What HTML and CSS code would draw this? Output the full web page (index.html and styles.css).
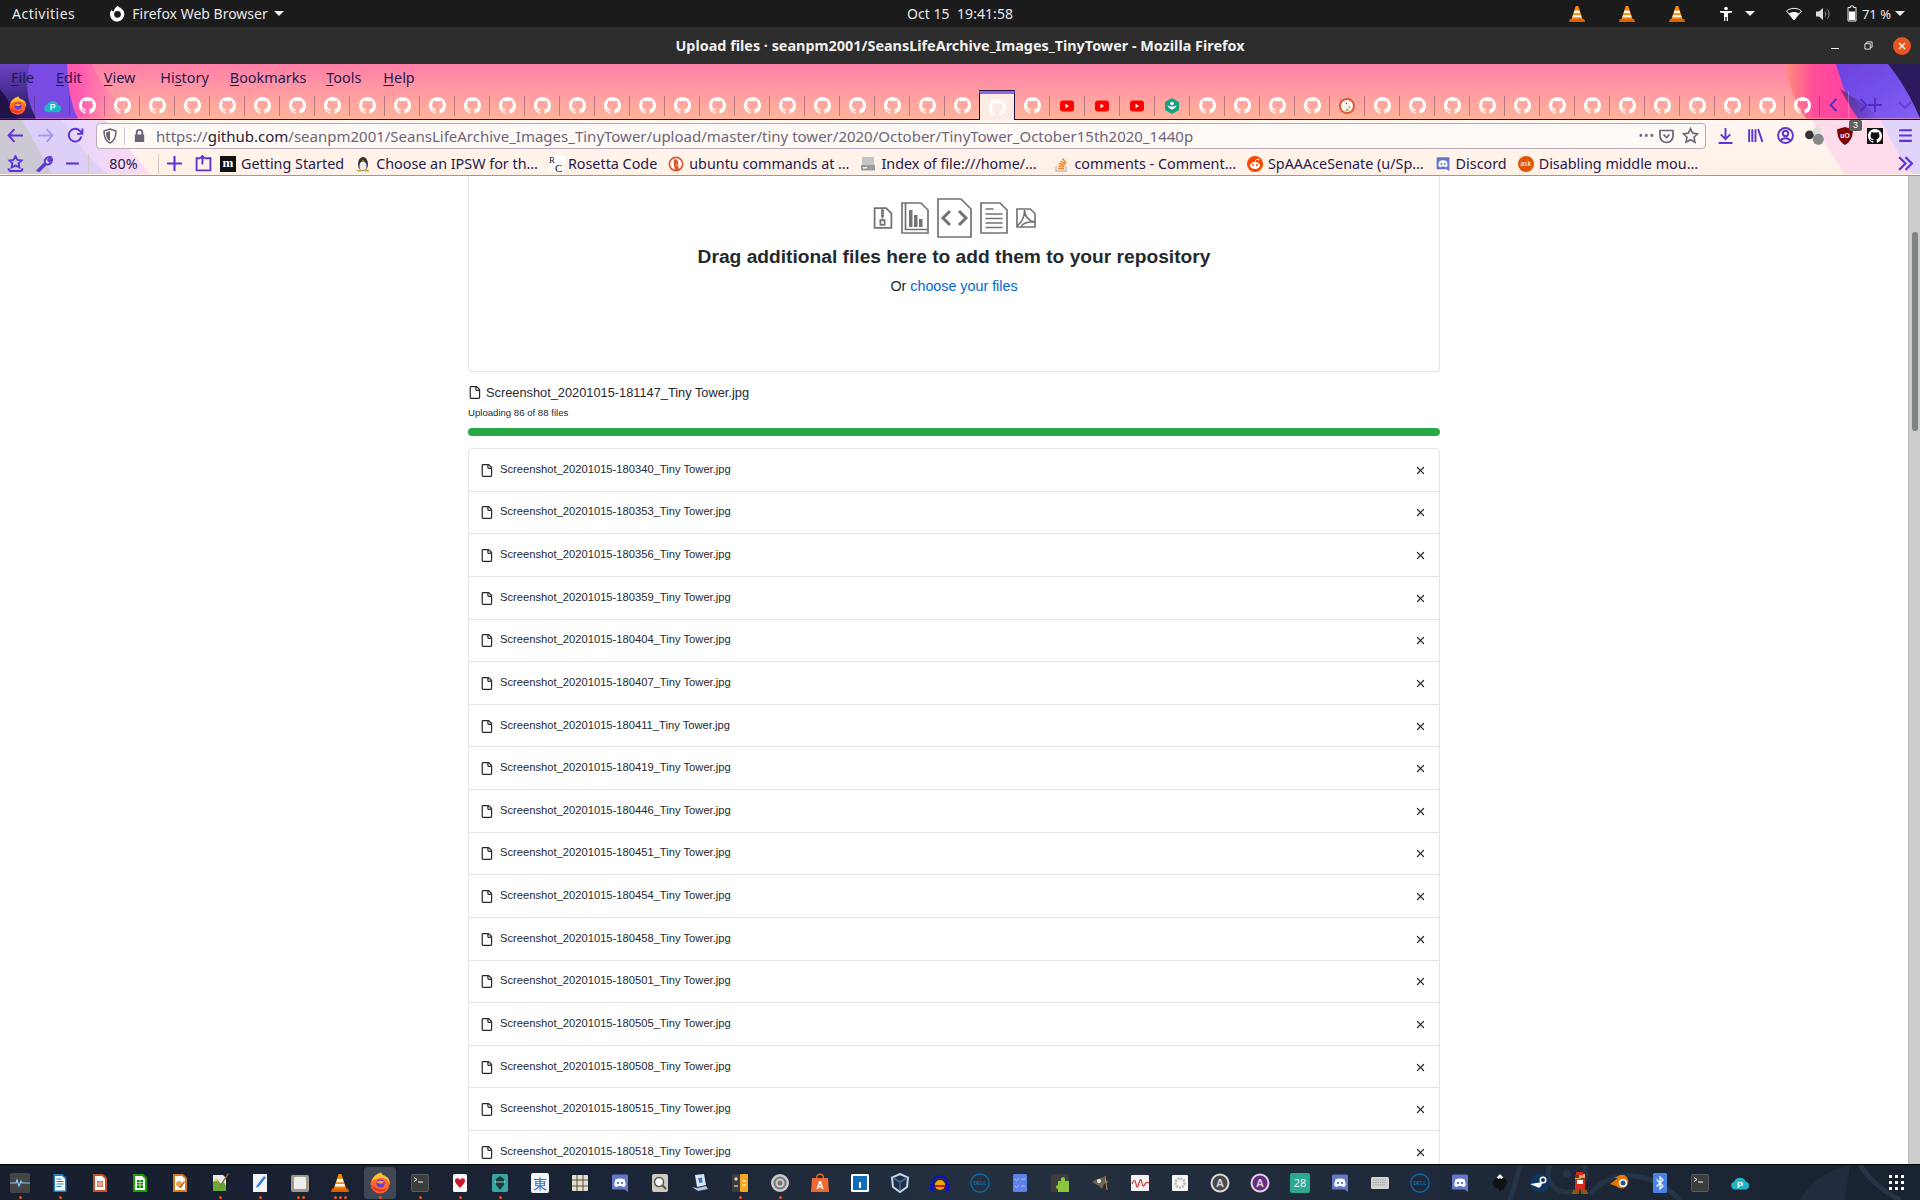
FILE: index.html
```html
<!DOCTYPE html>
<html lang="en">
<head>
    <meta charset="UTF-8">
    <title>Upload files · seanpm2001/SeansLifeArchive_Images_TinyTower</title>
    <link rel="stylesheet" href="styles.css">
</head>
<body>

<svg class="sprites" width="0" height="0">
    <symbol id="gh" viewBox="0 0 16 16"><path fill-rule="evenodd" d="M8 0C3.58 0 0 3.58 0 8c0 3.54 2.29 6.53 5.47 7.59.4.07.55-.17.55-.38 0-.19-.01-.82-.01-1.49-2.01.37-2.53-.49-2.69-.94-.09-.23-.48-.94-.82-1.13-.28-.15-.68-.52-.01-.53.63-.01 1.08.58 1.23.82.72 1.21 1.87.87 2.33.66.07-.52.28-.87.51-1.07-1.78-.2-3.64-.89-3.64-3.95 0-.87.31-1.59.82-2.15-.08-.2-.36-1.02.08-2.12 0 0 .67-.21 2.2.82.64-.18 1.32-.27 2-.27.68 0 1.36.09 2 .27 1.53-1.04 2.2-.82 2.2-.82.44 1.1.16 1.92.08 2.12.51.56.82 1.27.82 2.15 0 3.07-1.87 3.75-3.65 3.95.29.25.54.73.54 1.48 0 1.07-.01 1.93-.01 2.2 0 .21.15.46.55.38A8.013 8.013 0 0016 8c0-4.42-3.58-8-8-8z"/></symbol>
    <symbol id="file" viewBox="0 0 16 16"><path fill-rule="evenodd" d="M2 1.75C2 .784 2.784 0 3.75 0h6.586c.464 0 .909.184 1.237.513l2.914 2.914c.329.328.513.773.513 1.237v9.586A1.75 1.75 0 0113.25 16h-9.5A1.75 1.75 0 012 14.25V1.75zm1.75-.25a.25.25 0 00-.25.25v12.5c0 .138.112.25.25.25h9.5a.25.25 0 00.25-.25V6h-2.75A1.75 1.75 0 019 4.25V1.5H3.75zm6.75.062V4.25c0 .138.112.25.25.25h2.688a.252.252 0 00-.011-.013l-2.914-2.914a.272.272 0 00-.013-.011z"/></symbol>
    <symbol id="x" viewBox="0 0 16 16"><path d="M3.72 3.72a.75.75 0 011.06 0L8 6.94l3.22-3.22a.75.75 0 111.06 1.06L9.06 8l3.22 3.22a.75.75 0 11-1.06 1.06L8 9.06l-3.22 3.22a.75.75 0 01-1.06-1.06L6.94 8 3.72 4.78a.75.75 0 010-1.06z"/></symbol>
    <symbol id="yt" viewBox="0 0 16 16"><rect x="1" y="2.5" width="14" height="11" rx="3" fill="#f00"/><path d="M6.5 5.8v4.4L10 8z" fill="#fff"/></symbol>
    <symbol id="vlc" viewBox="0 0 20 20"><path d="M8.6 1h2.8l5 15H3.6z" fill="#f68a00"/><path d="M7.3 6h5.4l1 3.2H6.3zM5.7 11h8.6l.8 2.6H4.9z" fill="#f4f4f4"/><path d="M2 15.5h16l1 3.5H1z" fill="#e35d00"/></symbol>
    <symbol id="ff" viewBox="0 0 20 20"><circle cx="10" cy="11" r="8.5" fill="#ff6a2b"/><path d="M2.500 8C4 3.500 8 1 11.500.5c-.5 2 2 2.500 4 3.500 2.500 1.500 4 4.500 3.500 8-1-4.500-4-6.500-7.500-6.500S5 7 2.500 8z" fill="#ffc02e"/><path d="M1.500 11c1 4 4 7 8.500 7 3 0 5.500-1.500 7-4-2 1.500-4.500 2-7 1.500S3 13.500 1.500 11z" fill="#f0342c"/><circle cx="10.500" cy="10.500" r="3.700" fill="#6a3bd0"/><path d="M7 9.500c1.500-2 4.500-2 7-.5-1 .3-1.500.8-2 1.400-1.800.5-3.500 0-5-.9z" fill="#ff9a3c"/></symbol>
    <symbol id="term" viewBox="0 0 20 20"><rect x="1.500" y="1.500" width="17" height="17" rx="1.500" fill="#3d3d3d" stroke="#777" stroke-width=".6"/><path d="M4 4.500l3 2-3 2" fill="none" stroke="#fff" stroke-width="1"/><path d="M8 9h5" stroke="#fff" stroke-width="1"/></symbol>
    <symbol id="discord" viewBox="0 0 20 20"><path d="M3 1.500h14a1 1 0 011 1V19l-3.500-2.500H3a1 1 0 01-1-1v-13a1 1 0 011-1z" fill="#6577c8"/><path d="M5.500 6.500C8 5 12 5 14.500 6.500 15.500 9 15.800 11 15.500 13c-1 .6-2 1-2.700 1l-.6-1H7.800l-.6 1c-.7 0-1.700-.4-2.700-1-.3-2 0-4 1-6.500z" fill="#fff"/><circle cx="8" cy="10" r="1.200" fill="#6577c8"/><circle cx="12" cy="10" r="1.200" fill="#6577c8"/></symbol>
</svg>

<header class="top-bar">
    <div class="top-left">
        <span class="activities">Activities</span>
        <span class="app-menu">
            <svg class="app-icon" viewBox="0 0 20 20"><path fill="#fff" fill-rule="evenodd" d="M10 1c1 1.500 3 2 4.500 3A8.500 8.500 0 1 1 3 5.500C3.500 7 4.500 7.500 5.500 7.500 6 5 8 3 10 1zm0 6a4 4 0 1 0 0 8 4 4 0 0 0 0-8z"/></svg>
            Firefox Web Browser <i class="caret"></i>
        </span>
    </div>
    <div class="clock">Oct 15&nbsp; 19:41:58</div>
    <div class="tray">
        <svg class="tray-vlc"><use href="#vlc"/></svg>
        <svg class="tray-vlc"><use href="#vlc"/></svg>
        <svg class="tray-vlc"><use href="#vlc"/></svg>
        <svg class="tray-a11y" viewBox="0 0 16 16"><circle cx="8" cy="2.500" r="1.800" fill="#fff"/><path d="M2 5h12v1.600l-4 .6V15H8.700v-4H7.300v4H6V7.200l-4-.6z" fill="#fff"/></svg>
        <i class="caret caret-a11y"></i>
        <svg class="tray-wifi" viewBox="0 0 16 14"><path d="M8 13L.5 4C4.500.5 11.500.5 15.500 4z" fill="none" stroke="#eee"/><path d="M8 13L3 6.500c3-2 7-2 10 0z" fill="#fff"/></svg>
        <svg class="tray-sound" viewBox="0 0 16 14"><path d="M1 4.500h3L8 1v12L4 9.500H1z" fill="#ddd"/><path d="M10 4.500c1 1.500 1 3.500 0 5M12.500 2.500c2 2.500 2 6.500 0 9" fill="none" stroke="#999"/></svg>
        <svg class="tray-batt" viewBox="0 0 10 16"><path d="M3.500.5h3v1.500h2.500v13.500H1V2h2.500z" fill="none" stroke="#eee"/><rect x="2" y="6" width="6" height="8.500" fill="#fff"/></svg>
        <span class="batt-text">71 %</span>
        <i class="caret"></i>
    </div>
</header>

<div class="title-bar">
    <span class="title-text">Upload files · seanpm2001/SeansLifeArchive_Images_TinyTower - Mozilla Firefox</span>
    <div class="win-btns">
        <span class="win-min"></span>
        <svg class="win-max" viewBox="0 0 10 10"><path d="M1 3h6v6H1zM3 3V1h6v6H7" fill="none" stroke="#eee"/></svg>
        <span class="win-close"><svg viewBox="0 0 10 10"><path d="M2 2l6 6M8 2l-6 6" stroke="#fff" stroke-width="1.300"/></svg></span>
    </div>
</div>

<div class="chrome">
    <!-- theme artwork behind the toolbars -->
    <svg class="theme-art" viewBox="0 0 1920 112" preserveAspectRatio="none">
        <defs>
            <linearGradient id="tl" x1="0" x2="1" y1="0" y2="0"><stop offset="0" stop-color="#ff3fb4"/><stop offset=".6" stop-color="#ff5cb0"/><stop offset="1" stop-color="#ff8aa8" stop-opacity="0"/></linearGradient>
            <linearGradient id="tr" x1="0" x2="1" y1="0" y2="0"><stop offset="0" stop-color="#ff8f7a"/><stop offset=".4" stop-color="#ff4d9c"/><stop offset="1" stop-color="#ff3fa0"/></linearGradient>
            <linearGradient id="trp" x1="0" x2="1" y1="0" y2="1"><stop offset="0" stop-color="#6d42dc"/><stop offset=".5" stop-color="#7450ea"/><stop offset="1" stop-color="#8460f4"/></linearGradient>
            <linearGradient id="td" x1="0" x2="1" y1="0" y2="0"><stop offset="0" stop-color="#4a1f70" stop-opacity=".7"/><stop offset="1" stop-color="#4a1f70" stop-opacity="0"/></linearGradient>
            <linearGradient id="lnav" x1="0" x2="1" y1="0" y2="0"><stop offset="0" stop-color="#e4d6ff"/><stop offset="1" stop-color="#ffd9f0"/></linearGradient>
            <linearGradient id="ld" x1="0" x2="0" y1="0" y2="1"><stop offset="0" stop-color="#6a42c4"/><stop offset="1" stop-color="#2a1760"/></linearGradient>
        </defs>
        <path d="M0 0H92C100 20 118 40 135 55H0z" fill="url(#tl)"/>
        <path d="M0 0H67C68 20 70 40 78 55H0z" fill="#7a4be2"/>
        <path d="M0 0H30C24 20 28 40 36 55H0z" fill="url(#ld)"/>
        <path d="M0 26C8 34 12 45 18 55H0z" fill="#1f1246"/>
        <path d="M0 56H62C72 75 90 95 108 111H0z" fill="#ddd0f8"/>
        <path d="M62 56H105C118 75 138 95 150 111H108C90 95 72 75 62 56z" fill="url(#lnav)"/>
        <path d="M0 56H22C32 75 44 95 52 111H0z" fill="#ccc8d4"/>
        <path d="M1785 0H1840C1844 20 1848 40 1858 55H1806C1796 40 1788 20 1785 0z" fill="url(#tr)"/>
        <path d="M1836 0H1920V55H1858C1848 40 1842 20 1836 0z" fill="url(#trp)"/>
        <path d="M1840 25C1846 35 1850 45 1858 55H1880C1868 42 1855 35 1840 25z" fill="url(#td)"/>
        <path d="M1888 0H1920V55C1912 35 1900 15 1888 0z" fill="#2c1a5f"/>
        <path d="M1812 56H1880C1890 75 1900 95 1912 111H1845C1835 95 1820 75 1812 56z" fill="#ffdcec"/>
        <path d="M1880 56H1920V111H1912C1900 95 1890 75 1880 56z" fill="#e0d4fb"/>
    </svg>

    <nav class="menu-bar">
        <span><u>F</u>ile</span>
        <span><u>E</u>dit</span>
        <span class="menu-view"><u>V</u>iew</span>
        <span>Hi<u>s</u>tory</span>
        <span class="menu-marks"><u>B</u>ookmarks</span>
        <span><u>T</u>ools</span>
        <span><u>H</u>elp</span>
    </nav>

    <div class="tab-bar">
        <span class="tab"><svg class="tab-icon tab-ff"><use href="#ff"/></svg></span>
        <span class="tab"><svg class="tab-pcloud" viewBox="0 0 20 16"><path d="M5 14.500A4 4 0 014 6.700 6.500 6.500 0 0116 6.700a4 4 0 010 7.800z" fill="#1fb5c4"/><text x="10" y="12.500" class="svg-p">P</text></svg></span>
        <span class="tab gh"><svg class="tab-icon"><use href="#gh"/></svg></span>
        <span class="tab gh"><svg class="tab-icon"><use href="#gh"/></svg></span>
        <span class="tab gh"><svg class="tab-icon"><use href="#gh"/></svg></span>
        <span class="tab gh"><svg class="tab-icon"><use href="#gh"/></svg></span>
        <span class="tab gh"><svg class="tab-icon"><use href="#gh"/></svg></span>
        <span class="tab gh"><svg class="tab-icon"><use href="#gh"/></svg></span>
        <span class="tab gh"><svg class="tab-icon"><use href="#gh"/></svg></span>
        <span class="tab gh"><svg class="tab-icon"><use href="#gh"/></svg></span>
        <span class="tab gh"><svg class="tab-icon"><use href="#gh"/></svg></span>
        <span class="tab gh"><svg class="tab-icon"><use href="#gh"/></svg></span>
        <span class="tab gh"><svg class="tab-icon"><use href="#gh"/></svg></span>
        <span class="tab gh"><svg class="tab-icon"><use href="#gh"/></svg></span>
        <span class="tab gh"><svg class="tab-icon"><use href="#gh"/></svg></span>
        <span class="tab gh"><svg class="tab-icon"><use href="#gh"/></svg></span>
        <span class="tab gh"><svg class="tab-icon"><use href="#gh"/></svg></span>
        <span class="tab gh"><svg class="tab-icon"><use href="#gh"/></svg></span>
        <span class="tab gh"><svg class="tab-icon"><use href="#gh"/></svg></span>
        <span class="tab gh"><svg class="tab-icon"><use href="#gh"/></svg></span>
        <span class="tab gh"><svg class="tab-icon"><use href="#gh"/></svg></span>
        <span class="tab gh"><svg class="tab-icon"><use href="#gh"/></svg></span>
        <span class="tab gh"><svg class="tab-icon"><use href="#gh"/></svg></span>
        <span class="tab gh"><svg class="tab-icon"><use href="#gh"/></svg></span>
        <span class="tab gh"><svg class="tab-icon"><use href="#gh"/></svg></span>
        <span class="tab gh"><svg class="tab-icon"><use href="#gh"/></svg></span>
        <span class="tab gh"><svg class="tab-icon"><use href="#gh"/></svg></span>
        <span class="tab gh"><svg class="tab-icon"><use href="#gh"/></svg></span>
        <span class="tab gh active"><svg class="tab-icon"><use href="#gh"/></svg></span>
        <span class="tab gh"><svg class="tab-icon"><use href="#gh"/></svg></span>
        <span class="tab"><svg class="tab-icon"><use href="#yt"/></svg></span>
        <span class="tab"><svg class="tab-icon"><use href="#yt"/></svg></span>
        <span class="tab"><svg class="tab-icon"><use href="#yt"/></svg></span>
        <span class="tab"><svg class="tab-icon" viewBox="0 0 16 16"><path d="M8 0l7 4v8l-7 4-7-4V4z" fill="#14a37f"/><circle cx="8" cy="5.500" r="1.800" fill="#fff"/><path d="M3.500 7c1 3 2.500 4 4.500 4.500C10 11 11.500 10 12.500 7 11.500 8 10 8.500 8 8.500S4.500 8 3.500 7z" fill="#fff"/></svg></span>
        <span class="tab gh"><svg class="tab-icon"><use href="#gh"/></svg></span>
        <span class="tab gh"><svg class="tab-icon"><use href="#gh"/></svg></span>
        <span class="tab gh"><svg class="tab-icon"><use href="#gh"/></svg></span>
        <span class="tab gh"><svg class="tab-icon"><use href="#gh"/></svg></span>
        <span class="tab"><svg class="tab-icon" viewBox="0 0 16 16"><circle cx="8" cy="8" r="8" fill="#de5833"/><circle cx="8" cy="8" r="6" fill="#fff"/><path d="M5.500 3.500c3-1.500 6 .5 5 4l.5 5.500H7C6.500 10.500 4.500 7 5.500 3.500z" fill="#f3f3f3" stroke="#ddd" stroke-width=".4"/><circle cx="7.500" cy="5.500" r=".7" fill="#2d4f8e"/><path d="M8 9l3.500-1v2zM6.500 11h3l-.3 2H7z" fill="#e8a028"/></svg></span>
        <span class="tab gh"><svg class="tab-icon"><use href="#gh"/></svg></span>
        <span class="tab gh"><svg class="tab-icon"><use href="#gh"/></svg></span>
        <span class="tab gh"><svg class="tab-icon"><use href="#gh"/></svg></span>
        <span class="tab gh"><svg class="tab-icon"><use href="#gh"/></svg></span>
        <span class="tab gh"><svg class="tab-icon"><use href="#gh"/></svg></span>
        <span class="tab gh"><svg class="tab-icon"><use href="#gh"/></svg></span>
        <span class="tab gh"><svg class="tab-icon"><use href="#gh"/></svg></span>
        <span class="tab gh"><svg class="tab-icon"><use href="#gh"/></svg></span>
        <span class="tab gh"><svg class="tab-icon"><use href="#gh"/></svg></span>
        <span class="tab gh"><svg class="tab-icon"><use href="#gh"/></svg></span>
        <span class="tab gh"><svg class="tab-icon"><use href="#gh"/></svg></span>
        <span class="tab gh"><svg class="tab-icon"><use href="#gh"/></svg></span>
        <span class="tab gh"><svg class="tab-icon"><use href="#gh"/></svg></span>
        <div class="tab-ctrls">
            <svg class="tab-ctrl" viewBox="0 0 16 16"><path d="M10.500 2L4.500 8l6 6"/></svg>
            <span class="tab-divider"></span>
            <svg class="tab-ctrl" viewBox="0 0 16 16"><path d="M5.500 2l6 6-6 6"/></svg>
            <svg class="tab-ctrl tab-plus" viewBox="0 0 16 16"><path d="M8 1v14M1 8h14"/></svg>
            <svg class="tab-ctrl tab-down" viewBox="0 0 16 16"><path d="M2 5l6 6 6-6"/></svg>
        </div>
    </div>

    <div class="nav-bar">
        <button class="nav-btn"><svg viewBox="0 0 16 16"><path d="M7 2L1.500 8 7 14M2 8h13"/></svg></button>
        <button class="nav-btn faded"><svg viewBox="0 0 16 16"><path d="M9 2l5.500 6L9 14M14 8H1"/></svg></button>
        <button class="nav-btn"><svg viewBox="0 0 16 16"><path d="M13.500 9A6 6 0 1 1 12 3.500L14 6M14.500 1.500V6.500H9.500"/></svg></button>
        <div class="url-bar">
            <svg class="url-shield" viewBox="0 0 16 16"><path d="M8 1l6 2c0 6-1.500 10-6 12C3.500 13 2 9 2 3z" fill="none" stroke="#6b6478" stroke-width="1.500"/><path d="M8 3v10C5 11.500 4 8.500 4 4.500z" fill="#6b6478"/></svg>
            <span class="url-sep"></span>
            <svg class="url-lock" viewBox="0 0 16 16"><path d="M4 7V5a4 4 0 018 0v2h1v8H3V7zm2 0h4V5a2 2 0 00-4 0z" fill="#6b6478"/></svg>
            <span class="url-text">https://<b>github.com</b>/seanpm2001/SeansLifeArchive_Images_TinyTower/upload/master/tiny tower/2020/October/TinyTower_October15th2020_1440p</span>
            <span class="url-dots">•••</span>
            <svg class="url-pocket" viewBox="0 0 16 16"><path d="M1.500 2.500h13v5.500a6.500 6.500 0 01-13 0zM5 6.500L8 9.500l3-3" fill="none" stroke="#6b6478" stroke-width="1.700"/></svg>
            <svg class="url-star" viewBox="0 0 16 16"><path d="M8 1.500l2 4.300 4.700.6-3.400 3.200.9 4.700L8 12l-4.200 2.300.9-4.700L1.300 6.400l4.700-.6z" fill="none" stroke="#6b6478" stroke-width="1.500"/></svg>
        </div>
        <div class="nav-right">
            <button class="nav-btn"><svg viewBox="0 0 16 16"><path d="M8 1v10M3.500 7L8 11.500 12.500 7M1.500 15h13"/></svg></button>
            <button class="nav-btn"><svg viewBox="0 0 16 16"><path d="M2 2v12M5 2v12M8 2v12M10.500 2l4 12"/></svg></button>
            <button class="nav-btn"><svg viewBox="0 0 16 16"><circle cx="8" cy="8" r="7"/><circle cx="8" cy="6" r="2.500"/><path d="M3.500 12.500c2-2.500 7-2.500 9 0"/></svg></button>
            <button class="nav-btn"><svg class="plain spheres" viewBox="0 0 20 20"><circle cx="5" cy="9" r="4" fill="#333"/><circle cx="12" cy="6" r="4" fill="#ddd"/><circle cx="13" cy="13" r="5" fill="#888"/></svg></button>
            <button class="nav-btn badge-wrap"><svg class="plain" viewBox="0 0 16 16"><path d="M8 0l7 2c0 7-2 11-7 14C3 13 1 9 1 2z" fill="#800000"/><text x="8" y="9.500" class="svg-ub">uO</text></svg><span class="badge">3</span></button>
            <button class="nav-btn"><span class="gh-box"><svg><use href="#gh"/></svg></span></button>
            <button class="nav-btn"><svg viewBox="0 0 16 16"><path d="M2 3h12M2 8h12M2 13h12" stroke-width="2"/></svg></button>
        </div>
    </div>

    <div class="bookmarks">
        <button class="bm-tool bm-star"><svg viewBox="0 0 16 16"><path d="M8 1l1.800 3.600 3.900.5-2.800 2.700.7 3.900L8 10l-3.600 1.700.7-3.900L2.300 5.100l3.900-.5zM1.500 12.500c0 2 1 2.500 2 2.500h9c1 0 2-.5 2-2.500"/></svg></button>
        <button class="bm-tool bm-wrench"><svg viewBox="0 0 16 16"><path d="M1.500 14.500L8.500 7.500C7.500 4 10.500 1 14 2l-2.500 2.500 1 1.500L15 4c.5 3-2.500 6-5.500 4.500L3 15z"/></svg></button>
        <button class="bm-tool bm-minus"><svg viewBox="0 0 16 16"><path d="M2 8h12" stroke-width="2"/></svg></button>
        <span class="bm-zoom">80%</span>
        <button class="bm-tool bm-plus"><svg viewBox="0 0 16 16"><path d="M8 1v14M1 8h14" stroke-width="2"/></svg></button>
        <button class="bm-tool bm-lib"><svg viewBox="0 0 16 16"><path d="M9 3H14.500V14.500H1.500V3H5M7 9V1M5 3l2-2 2 2"/></svg></button>

        <span class="bm"><span class="bm-m">m</span>Getting Started</span>
        <span class="bm"><svg class="bm-icon" viewBox="0 0 16 16"><ellipse cx="8" cy="8" rx="5" ry="7" fill="#333"/><ellipse cx="8" cy="10" rx="3.500" ry="4.500" fill="#eee"/><path d="M2 14h4v1.500H2zM10 14h4v1.500h-4zM7 4h2l-1 1.500z" fill="#d9a514"/></svg>Choose an IPSW for th…</span>
        <span class="bm"><span class="bm-rc">R<br><span class="rc-c">C</span></span>Rosetta Code</span>
        <span class="bm"><svg class="bm-icon" viewBox="0 0 16 16"><circle cx="8" cy="8" r="7.500" fill="#de5833"/><circle cx="8" cy="8" r="5.800" fill="#fff"/><path d="M6 3.500c3-1 5 2 4 5l1 5.500H7C6.500 11 5 7 6 3.500z" fill="#de5833"/><path d="M7 9l3.500-.5v1.500z" fill="#fdd20a"/></svg>ubuntu commands at …</span>
        <span class="bm bm-wide"><svg class="bm-icon" viewBox="0 0 16 16"><path d="M2 1h12v11H2z" fill="#c4c4c4"/><path d="M1 9h14v5.500H1z" fill="#9b9b9b"/><path d="M3 11h4v1.500H3z" fill="#eee"/></svg>Index of file:///home/…</span>
        <span class="bm"><svg class="bm-icon" viewBox="0 0 16 16"><path d="M3 10v5h10v-5" fill="none" stroke="#bcbbbb" stroke-width="1.300"/><path d="M5 12.500h6M5.300 10l6 .6M6 7.500l5.800 1.500M7.300 5l5.200 3M9.500 2.500L13 7" stroke="#f48024" stroke-width="1.300"/></svg>comments - Comment…</span>
        <span class="bm"><svg class="bm-icon" viewBox="0 0 16 16"><circle cx="8" cy="8" r="8" fill="#ff4500"/><ellipse cx="8" cy="9.500" rx="5" ry="3.500" fill="#fff"/><circle cx="6" cy="9" r="1" fill="#ff4500"/><circle cx="10" cy="9" r="1" fill="#ff4500"/><circle cx="11.500" cy="3.500" r="1" fill="#fff"/><path d="M8 6l1-2.500 2.500 0" stroke="#fff" stroke-width=".7" fill="none"/></svg>SpAAAceSenate (u/Sp…</span>
        <span class="bm"><svg class="bm-icon"><use href="#discord"/></svg>Discord</span>
        <span class="bm"><span class="bm-ask">ask</span>Disabling middle mou…</span>
        <button class="bm-tool bm-more"><svg viewBox="0 0 16 16"><path d="M2 2l6 6-6 6M8 2l6 6-6 6" stroke-width="2"/></svg></button>
    </div>
</div>

<div class="viewport">
    <main class="page">
        <section class="dropzone">
            <div class="file-types">
                <svg class="ft-sm" viewBox="0 0 18 21"><path d="M1 1h11l5 5v14H1zM8.500 2v9M7 3.500h3M7 6h3M7 8.500h3"/><rect x="6.500" y="12.500" width="4" height="4.500"/></svg>
                <svg class="ft-md" viewBox="0 0 28 32"><path d="M1 1h19l7 7v23H1z"/><path d="M4.500 1v26.500h22" /><path class="ft-bar" d="M8 8h3.500v17H8zM13 13h3.500v12H13zM18 17h3.500v8H18z"/></svg>
                <svg class="ft-lg" viewBox="0 0 35 40"><path d="M1 1h23l10 10v28H1z"/><path class="ft-thick" d="M13 13l-7 7 7 7M22 13l7 7-7 7"/></svg>
                <svg class="ft-md" viewBox="0 0 28 32"><path d="M1 1h19l7 7v23H1zM5.500 7h8M5.500 12h17M5.500 16.500h17M5.500 21h17M5.500 25.500h17"/></svg>
                <svg class="ft-sm" viewBox="0 0 21 21"><path d="M1 1h14l5 5v14H1zM1 19C6 15 9 10 9 2c0 7 3 11 11 13-7-1-12 0-15 5"/></svg>
            </div>
            <h2 class="drop-title">Drag additional files here to add them to your repository</h2>
            <p class="drop-sub">Or <a href="#">choose your files</a></p>
        </section>

        <div class="current-file">
            <svg class="file-icon"><use href="#file"/></svg>
            <span>Screenshot_20201015-181147_Tiny Tower.jpg</span>
        </div>
        <div class="upload-status">Uploading 86 of 88 files</div>
        <div class="progress"></div>

        <ul class="file-list">
            <li class="file-row"><svg class="file-icon"><use href="#file"/></svg><span class="file-name">Screenshot_20201015-180340_Tiny Tower.jpg</span><svg class="x-icon"><use href="#x"/></svg></li>
            <li class="file-row"><svg class="file-icon"><use href="#file"/></svg><span class="file-name">Screenshot_20201015-180353_Tiny Tower.jpg</span><svg class="x-icon"><use href="#x"/></svg></li>
            <li class="file-row"><svg class="file-icon"><use href="#file"/></svg><span class="file-name">Screenshot_20201015-180356_Tiny Tower.jpg</span><svg class="x-icon"><use href="#x"/></svg></li>
            <li class="file-row"><svg class="file-icon"><use href="#file"/></svg><span class="file-name">Screenshot_20201015-180359_Tiny Tower.jpg</span><svg class="x-icon"><use href="#x"/></svg></li>
            <li class="file-row"><svg class="file-icon"><use href="#file"/></svg><span class="file-name">Screenshot_20201015-180404_Tiny Tower.jpg</span><svg class="x-icon"><use href="#x"/></svg></li>
            <li class="file-row"><svg class="file-icon"><use href="#file"/></svg><span class="file-name">Screenshot_20201015-180407_Tiny Tower.jpg</span><svg class="x-icon"><use href="#x"/></svg></li>
            <li class="file-row"><svg class="file-icon"><use href="#file"/></svg><span class="file-name">Screenshot_20201015-180411_Tiny Tower.jpg</span><svg class="x-icon"><use href="#x"/></svg></li>
            <li class="file-row"><svg class="file-icon"><use href="#file"/></svg><span class="file-name">Screenshot_20201015-180419_Tiny Tower.jpg</span><svg class="x-icon"><use href="#x"/></svg></li>
            <li class="file-row"><svg class="file-icon"><use href="#file"/></svg><span class="file-name">Screenshot_20201015-180446_Tiny Tower.jpg</span><svg class="x-icon"><use href="#x"/></svg></li>
            <li class="file-row"><svg class="file-icon"><use href="#file"/></svg><span class="file-name">Screenshot_20201015-180451_Tiny Tower.jpg</span><svg class="x-icon"><use href="#x"/></svg></li>
            <li class="file-row"><svg class="file-icon"><use href="#file"/></svg><span class="file-name">Screenshot_20201015-180454_Tiny Tower.jpg</span><svg class="x-icon"><use href="#x"/></svg></li>
            <li class="file-row"><svg class="file-icon"><use href="#file"/></svg><span class="file-name">Screenshot_20201015-180458_Tiny Tower.jpg</span><svg class="x-icon"><use href="#x"/></svg></li>
            <li class="file-row"><svg class="file-icon"><use href="#file"/></svg><span class="file-name">Screenshot_20201015-180501_Tiny Tower.jpg</span><svg class="x-icon"><use href="#x"/></svg></li>
            <li class="file-row"><svg class="file-icon"><use href="#file"/></svg><span class="file-name">Screenshot_20201015-180505_Tiny Tower.jpg</span><svg class="x-icon"><use href="#x"/></svg></li>
            <li class="file-row"><svg class="file-icon"><use href="#file"/></svg><span class="file-name">Screenshot_20201015-180508_Tiny Tower.jpg</span><svg class="x-icon"><use href="#x"/></svg></li>
            <li class="file-row"><svg class="file-icon"><use href="#file"/></svg><span class="file-name">Screenshot_20201015-180515_Tiny Tower.jpg</span><svg class="x-icon"><use href="#x"/></svg></li>
            <li class="file-row"><svg class="file-icon"><use href="#file"/></svg><span class="file-name">Screenshot_20201015-180518_Tiny Tower.jpg</span><svg class="x-icon"><use href="#x"/></svg></li>
        </ul>
    </main>
    <div class="scrollbar"><div class="scroll-thumb"></div></div>
</div>

<footer class="dock">
    <!-- faint wallpaper behind the dock -->
    <svg class="dock-art" viewBox="0 0 1920 36" preserveAspectRatio="none">
        <g fill="none" stroke="#263447" stroke-width="5">
            <circle cx="1567" cy="9" r="19"/>
            <path d="M1510 36C1515 20 1518 10 1520 0M1680 36C1660 15 1620 -5 1590 30M1860 0C1870 15 1880 25 1900 36"/>
        </g>
        <circle cx="1567" cy="9" r="4" fill="#263447"/>
        <path d="M1800 36C1810 20 1825 5 1850 0L1845 36z" fill="#212c3e"/>
    </svg>
    <span class="dock-item dot1"><span class="dk-sysmon"><svg viewBox="0 0 20 20"><path d="M0 10h6l1-3 2 6 2-5 1 2h8" fill="none" stroke="#8fc7ef" stroke-width="1.200"/></svg></span></span>
    <span class="dock-item dot1"><svg class="dk" viewBox="0 0 20 20"><path d="M3.500 1h9l4 4v14h-13z" fill="#1a7fc4"/><path d="M5 3h7l3 3v11.500H5z" fill="#fff"/><path d="M6.500 6h5M6.500 8.500h7M6.500 11h7M6.500 13.500h5" stroke="#1a7fc4" stroke-width="1.200"/></svg></span>
    <span class="dock-item"><svg class="dk" viewBox="0 0 20 20"><path d="M3 1h10l4 4v14H3z" fill="#c8502a"/><path d="M5 3h7l3 3v11H5z" fill="#fff"/><path d="M7 8h6v6H7z" fill="#c8502a"/><path d="M7 10h6M7 12h6M9 8v6M11 8v6" stroke="#fff" stroke-width=".6"/></svg></span>
    <span class="dock-item"><svg class="dk" viewBox="0 0 20 20"><path d="M3 1h10l4 4v14H3z" fill="#18a303"/><path d="M5 3h7l3 3v11H5z" fill="#fff"/><path d="M7 7h6v8H7z" fill="#128002"/><path d="M7 9.500h6M7 12h6M10 7v8" stroke="#fff" stroke-width=".7"/></svg></span>
    <span class="dock-item"><svg class="dk" viewBox="0 0 20 20"><path d="M3 1h10l4 4v14H3z" fill="#d97a1a"/><path d="M5 3h7l3 3v11H5z" fill="#fff"/><circle cx="9" cy="11" r="3" fill="#e6a44a"/><path d="M9 15l5-7 1 1-4 6z" fill="#c85a10"/></svg></span>
    <span class="dock-item dot1"><svg class="dk" viewBox="0 0 20 20"><path d="M3 2h10l3 3v13H3z" fill="#e9e9e9"/><path d="M3 9l4-3 4 5 3-2 2 4v5H3z" fill="#6aa83a"/><circle cx="6" cy="7" r="1.500" fill="#f2d33c"/><path d="M18 0l-8 12 1 1L19 1z" fill="#8a6a2c"/></svg></span>
    <span class="dock-item dot1"><svg class="dk" viewBox="0 0 20 20"><path d="M3 1h14v18H3z" fill="#f2f2f2"/><path d="M6 15l1-3 7-9 2 1.500-7 9z" fill="#3b82e0"/></svg></span>
    <span class="dock-item dot2"><svg class="dk" viewBox="0 0 20 20"><rect x="1" y="2" width="18" height="17" rx="2" fill="#a39c8c"/><rect x="4" y="4" width="12" height="12" rx="1" fill="#eee"/></svg></span>
    <span class="dock-item dot3"><svg class="dk"><use href="#vlc"/></svg></span>
    <span class="dock-item dot1 is-active"><svg class="dk dk-ff"><use href="#ff"/></svg></span>
    <span class="dock-item dot1"><svg class="dk"><use href="#term"/></svg></span>
    <span class="dock-item dot1"><svg class="dk" viewBox="0 0 20 20"><rect x="3" y="1" width="14" height="18" rx="1.500" fill="#f8f8f8"/><path d="M10 15C6 11 5 9 5 7.500 5 5 8.500 4.500 10 7c1.500-2.500 5-2 5 .5C15 9 14 11 10 15z" fill="#d0142c"/></svg></span>
    <span class="dock-item dot1"><svg class="dk" viewBox="0 0 20 20"><rect x="2" y="1" width="16" height="18" rx="1.500" fill="#3aa5a0"/><path d="M10 3l4 3v6l-4 5-4-5V6z" fill="#1d3a3e"/><path d="M5 9h10" stroke="#cfe" stroke-width=".7"/></svg></span>
    <span class="dock-item"><span class="dk-kanji">東</span></span>
    <span class="dock-item"><svg class="dk" viewBox="0 0 20 20"><rect x="2" y="2" width="16" height="16" rx="1" fill="#e3dfcc"/><path d="M7 2v16M13 2v16M2 7h16M2 13h16" stroke="#55513f" stroke-width="1"/></svg></span>
    <span class="dock-item"><svg class="dk"><use href="#discord"/></svg></span>
    <span class="dock-item"><svg class="dk" viewBox="0 0 20 20"><rect x="2" y="1" width="16" height="18" rx="2" fill="#cfcbbf"/><circle cx="9" cy="9" r="4.500" fill="#fff" stroke="#555" stroke-width="1.500"/><path d="M12 12l4 4" stroke="#555" stroke-width="2"/></svg></span>
    <span class="dock-item"><svg class="dk" viewBox="0 0 20 20"><path d="M5 2l9-1 2 11-9 2z" fill="#dbe7f7"/><path d="M8 5l4-.5.5 5-3 .5z" fill="#3a78c8"/><path d="M2 14l6 4 10-2-2-3-9 2z" fill="#aac6e8"/></svg></span>
    <span class="dock-item dot1"><svg class="dk" viewBox="0 0 20 20"><rect x="2" y="1" width="8" height="18" rx="1" fill="#3d3d3d"/><rect x="10" y="1" width="8" height="18" rx="1" fill="#f5a623"/><path d="M4 6h4M6 4v4M4 13h4" stroke="#fff"/><path d="M12 8h4M12 12h4" stroke="#fff" stroke-width="1.200"/></svg></span>
    <span class="dock-item dot1"><svg class="dk" viewBox="0 0 20 20"><circle cx="10" cy="10" r="9" fill="#ccc"/><circle cx="10" cy="10" r="6.500" fill="#777"/><circle cx="10" cy="10" r="4.500" fill="#ccc"/><circle cx="10" cy="10" r="2.500" fill="#777"/></svg></span>
    <span class="dock-item"><svg class="dk" viewBox="0 0 20 20"><path d="M2 5h16l1 14H1z" fill="#ee6a32"/><path d="M6.500 5c0-5 7-5 7 0" fill="none" stroke="#ee6a32" stroke-width="1.300"/><text x="10" y="16" class="svg-bag">A</text></svg></span>
    <span class="dock-item"><svg class="dk" viewBox="0 0 20 20"><rect x="1" y="1" width="18" height="18" rx="1.500" fill="#fff"/><rect x="3" y="3" width="14" height="14" fill="#0f6cb6"/><path d="M9 15V9h2v6z" fill="#fff"/></svg></span>
    <span class="dock-item"><svg class="dk" viewBox="0 0 20 20"><path d="M10 1l8 3.500-1 9.500-7 5-7-5-1-9.500z" fill="none" stroke="#c6d6ea" stroke-width="2"/><path d="M10 9l7-4M10 9L3 5M10 9v9" stroke="#3c6fa6" stroke-width="1.500"/></svg></span>
    <span class="dock-item"><svg class="dk" viewBox="0 0 20 20"><path d="M2 13C2 0 18 0 18 13" fill="none" stroke="#1010c8" stroke-width="2"/><rect x="0" y="11" width="4" height="7" rx="1.500" fill="#1010c8"/><rect x="16" y="11" width="4" height="7" rx="1.500" fill="#1010c8"/><circle cx="10" cy="12" r="5" fill="#f7a600"/><path d="M5 12h10v2H5z" fill="#d01818"/></svg></span>
    <span class="dock-item"><svg class="dk" viewBox="0 0 24 24"><circle cx="12" cy="12" r="11" fill="none" stroke="#0a6fb5" stroke-width="1.400"/><text x="12" y="14.500" class="svg-dell">DELL</text></svg></span>
    <span class="dock-item"><svg class="dk" viewBox="0 0 20 20"><rect x="3" y="1" width="14" height="18" rx="1.500" fill="#5f82e8"/><path d="M5 6l1.500 1.500L9 5M5 13l1.500 1.500L9 12M11 6h4M11 13h4" fill="none" stroke="#bcd" stroke-width=".8"/></svg></span>
    <span class="dock-item"><svg class="dk" viewBox="0 0 20 20"><rect x="1" y="1" width="18" height="18" rx="2" fill="#3d3d3d"/><path d="M8 8h3V6a2 2 0 014 0v2h4v11H8v-3a2 2 0 010-4z" fill="#8cc63e"/></svg></span>
    <span class="dock-item"><svg class="dk" viewBox="0 0 20 20"><path d="M2 9l5-3 7-2 2 3 3 2-5 2-2 5-3-3z" fill="#6b6555"/><circle cx="9" cy="8" r="2" fill="#eee"/><path d="M15 3l2 14" stroke="#c88a4a" stroke-width="1"/></svg></span>
    <span class="dock-item"><svg class="dk" viewBox="0 0 20 20"><rect x="1" y="2" width="18" height="16" rx="1" fill="#f4f4f4"/><path d="M2 11c2-5 3-5 4 0s2 3 3-1 2-5 3 0 2 3 3 1 2-2 4-1" fill="none" stroke="#d0303a" stroke-width="1.200"/></svg></span>
    <span class="dock-item"><svg class="dk" viewBox="0 0 20 20"><rect x="2" y="2" width="16" height="16" rx="1" fill="#f5f5f5"/><circle cx="10" cy="10" r="4.500" fill="none" stroke="#bbb" stroke-width="2.500" stroke-dasharray="2 1"/></svg></span>
    <span class="dock-item dk-a-gray"><svg class="dk" viewBox="0 0 20 20"><circle cx="10" cy="10" r="8.500" stroke="currentColor" stroke-width="2"/><text x="10" y="14" class="svg-a">A</text></svg></span>
    <span class="dock-item dk-a-purple"><svg class="dk" viewBox="0 0 20 20"><circle cx="10" cy="10" r="8.500" stroke="currentColor" stroke-width="2"/><text x="10" y="14" class="svg-a">A</text></svg></span>
    <span class="dock-item"><span class="dk-cal">28</span></span>
    <span class="dock-item"><svg class="dk"><use href="#discord"/></svg></span>
    <span class="dock-item"><svg class="dk" viewBox="0 0 20 20"><rect x="1" y="4" width="18" height="12" rx="1.500" fill="#d4d4d4"/><path d="M3 7h14M3 9.500h14M3 12h14" stroke="#999" stroke-dasharray="1.500 .8"/></svg></span>
    <span class="dock-item"><svg class="dk" viewBox="0 0 24 24"><circle cx="12" cy="12" r="11" fill="none" stroke="#0a6fb5" stroke-width="1.400"/><text x="12" y="14.500" class="svg-dell">DELL</text></svg></span>
    <span class="dock-item"><svg class="dk"><use href="#discord"/></svg></span>
    <span class="dock-item"><svg class="dk" viewBox="0 0 20 20"><path d="M10 1l8 8-3 4-1 4-2-1-2 3-2-4-3 0L2 9z" fill="#111"/><path d="M10 1l3.500 3.500-2 1.500-1.500-1-1.500 1-2-1.500z" fill="#eee"/></svg></span>
    <span class="dock-item"><svg class="dk" viewBox="0 0 20 20"><circle cx="10" cy="10" r="9.500" fill="#10365f"/><circle cx="13" cy="7" r="3.500" fill="#fff"/><circle cx="13" cy="7" r="2" fill="#10365f"/><path d="M0 11l7 3a2.500 2.500 0 004-1l2-4" fill="#fff"/></svg></span>
    <span class="dock-item"><svg class="dk dk-mario" viewBox="0 0 12 16" shape-rendering="crispEdges"><path d="M3 0h5v2H3z" fill="#d8281c"/><path d="M8 1h2v1H8zM2 2h8v3H2z" fill="#e8a060"/><path d="M2 2h3v2H2zM7 4h3v1H7z" fill="#6b3c10"/><path d="M2 5h8v4H2z" fill="#d8281c"/><path d="M4 6h4v5H4z" fill="#fff"/><path d="M2 9h8v4H2z" fill="#d8281c"/><path d="M1 13h4v3H0zM7 13h4l1 3H7z" fill="#8a5a14"/></svg></span>
    <span class="dock-item"><svg class="dk" viewBox="0 0 20 20"><path d="M0 11l8-6H4l6-3h4a7 7 0 11-8 11l-3-1z" fill="#ea7600"/><circle cx="13" cy="10" r="4" fill="#fff"/><circle cx="13" cy="10" r="2.500" fill="#265787"/></svg></span>
    <span class="dock-item"><svg class="dk" viewBox="0 0 20 20"><rect x="3" y="0" width="14" height="20" rx="1.500" fill="#4c82e4"/><path d="M6.500 6.500L13 13l-3 3V4l3 3-6.500 6.500" fill="none" stroke="#fff" stroke-width="1.200"/></svg></span>
    <span class="dock-item"><svg class="dk"><use href="#term"/></svg></span>
    <span class="dock-item"><svg class="dk" viewBox="0 0 20 16"><path d="M5 14.500A4 4 0 014 6.700 6.500 6.500 0 0116 6.700a4 4 0 010 7.800z" fill="#1fb5c4"/><text x="10" y="12.500" class="svg-p">P</text></svg></span>
    <span class="show-apps">
        <i></i><i></i><i></i><i></i><i></i><i></i><i></i><i></i><i></i>
    </span>
</footer>

</body>
</html>
```

FILE: styles.css
```css
* {
    box-sizing: border-box;
}

html, body {
    height: 100%;
}

body {
    margin: 0;
    display: flex;
    flex-direction: column;
    overflow: hidden;
    font-family: "Liberation Sans", Arial, sans-serif;
    background: #fff;
}

.sprites {
    position: absolute;
}

button {
    border: none;
    padding: 0;
    background: none;
}

/* gnome top bar */
.top-bar {
    flex: 0 0 27px;
    display: grid;
    grid-template-columns: 1fr auto 1fr;
    align-items: center;
    background: #1b1b1b;
    color: #e8e8e8;
    font-family: "Noto Sans", sans-serif;
    font-size: 14px;
}

.top-left {
    display: flex;
    align-items: center;
}

.activities {
    margin-left: 12px;
    letter-spacing: 0.5px;
}

.app-menu {
    display: flex;
    align-items: center;
    gap: 6px;
    margin-left: 34px;
}

.app-icon {
    width: 17px;
    height: 17px;
}

.caret {
    display: inline-block;
    width: 0;
    height: 0;
    border-left: 5px solid transparent;
    border-right: 5px solid transparent;
    border-top: 5px solid #eee;
}

.clock {
    margin-left: 0;
    letter-spacing: 0.05px;
}

.tray {
    display: flex;
    align-items: center;
    justify-content: flex-end;
    padding-right: 15px;
}

.tray-vlc {
    width: 18px;
    height: 18px;
    margin-right: 32px;
}

.tray-a11y {
    width: 16px;
    height: 18px;
}

.caret-a11y {
    margin: 0 31px 0 11px;
}

.tray-wifi {
    width: 16px;
    height: 14px;
    margin-right: 13px;
}

.tray-sound {
    width: 16px;
    height: 14px;
    margin-right: 16px;
}

.tray-batt {
    width: 10px;
    height: 17px;
    margin-right: 5px;
}

.batt-text {
    margin-right: 4px;
    font-size: 13px;
}

/* window title */
.title-bar {
    flex: 0 0 37px;
    position: relative;
    display: flex;
    align-items: center;
    justify-content: center;
    background: #2d2d2d;
    color: #f0f0f0;
    font-family: "Noto Sans", sans-serif;
    font-size: 14.4px;
    font-weight: 700;
}

.win-btns {
    position: absolute;
    right: 9px;
    top: 0;
    height: 100%;
    display: flex;
    align-items: center;
}

.win-min {
    width: 8px;
    height: 1px;
    margin: 5px 25px 0 0;
    background: #eee;
}

.win-max {
    width: 9px;
    height: 9px;
    margin-right: 20px;
}

.win-close {
    display: flex;
    align-items: center;
    justify-content: center;
    width: 18px;
    height: 18px;
    border-radius: 50%;
    background: #e95420;
}

.win-close svg {
    width: 10px;
    height: 10px;
}

/* firefox toolbars, over the theme */
.chrome {
    flex: 0 0 112px;
    position: relative;
    display: flex;
    flex-direction: column;
    color: #1f1a4d;
    font-family: "Noto Sans", sans-serif;
    font-size: 14.35px;
    background: #fff;
    border-bottom: 1px solid #b3917f;
}

.chrome::before {
    content: "";
    position: absolute;
    left: 0;
    right: 0;
    top: 0;
    height: 56px;
    background: linear-gradient(#ff7fa9, #ffb69b);
}

.chrome::after {
    content: "";
    position: absolute;
    left: 0;
    right: 0;
    top: 56px;
    bottom: 0;
    background: linear-gradient(#fff7f2, #fff1e6);
}

.theme-art {
    position: absolute;
    left: 0;
    top: 0;
    width: 100%;
    height: 100%;
    z-index: 1;
}

.menu-bar,
.tab-bar,
.nav-bar,
.bookmarks {
    position: relative;
    z-index: 2;
}

.menu-bar {
    flex: 0 0 27px;
    display: flex;
    align-items: center;
    gap: 22px;
    padding-left: 11px;
    font-size: 14.4px;
}

.menu-bar u {
    text-underline-offset: 2px;
}

.menu-view {
    margin-right: 3px;
}

.menu-marks {
    margin-left: -1px;
    margin-right: -2px;
}

.tab-bar {
    flex: 0 0 29px;
    display: flex;
    align-items: center;
    border-bottom: 1px solid #1b1240;
}

.tab {
    flex: 0 0 35px;
    height: 20px;
    margin-top: 1px;
    display: flex;
    align-items: center;
    justify-content: center;
    border-right: 1px solid rgba(70, 40, 80, 0.38);
    fill: #fff;
}

.tab-icon {
    width: 16px;
    height: 16px;
}

.tab-icon.tab-ff {
    width: 19px;
    height: 19px;
}

.tab-pcloud {
    width: 19px;
    height: 16px;
}

.tab.gh .tab-icon {
    width: 17px;
    height: 17px;
}

.tab.active {
    height: 29px;
    align-self: flex-start;
    margin: 0 0 -1px -1px;
    flex-basis: 36px;
    background: #fdece6;
    border: 1px solid #1b1240;
    border-top: 3px solid #8a68e6;
    border-bottom: none;
    box-shadow: 0 -1px 0 #1b1240;
    fill: #fff;
}

.tab-ctrls {
    display: flex;
    align-items: center;
    flex: 1;
    height: 28px;
    padding-left: 6px;
}

.tab-ctrl {
    width: 16px;
    height: 16px;
    fill: none;
    stroke: #4f2cc8;
    stroke-width: 1.8;
}

.tab-divider {
    width: 1px;
    height: 28px;
    margin: 0 6px;
    background: rgba(255, 255, 255, 0.25);
}

.tab-plus {
    margin-left: -4px;
}

.tab-down {
    margin-left: 14px;
    opacity: 0.6;
}

.nav-bar {
    flex: 0 0 29px;
    display: flex;
    align-items: center;
    padding-top: 2px;
}

.nav-btn {
    flex: 0 0 30px;
    height: 24px;
    display: flex;
    align-items: center;
    justify-content: center;
    position: relative;
}

.nav-btn svg,
.bm-tool svg {
    width: 17px;
    height: 17px;
    fill: none;
    stroke: #5b35d5;
    stroke-width: 1.8;
}

.nav-btn svg.plain {
    stroke: none;
    width: 18px;
    height: 18px;
}

.nav-btn svg.spheres {
    width: 22px;
    height: 22px;
}

.nav-btn.faded svg {
    stroke: #a998ee;
}

.url-bar {
    flex: 0 0 1610px;
    height: 26px;
    margin-left: 6px;
    display: flex;
    align-items: center;
    padding: 0 6px 0 5px;
    background: #fffaf6;
    border: 1px solid #bcaab8;
    border-radius: 4px;
    color: #6c6679;
    font-size: 15px;
}

.url-shield {
    width: 16px;
    height: 16px;
}

.url-sep {
    width: 1px;
    height: 18px;
    margin: 0 7px 0 6px;
    background: #cfc5cc;
}

.url-lock {
    width: 15px;
    height: 15px;
    margin-right: 9px;
}

.url-text {
    flex: 1;
    white-space: nowrap;
}

.url-text b {
    font-weight: 400;
    color: #1f1a3a;
}

.url-dots {
    margin-right: 3px;
    font-size: 12px;
    letter-spacing: 1px;
}

.url-pocket {
    width: 17px;
    height: 16px;
    margin-right: 7px;
}

.url-star {
    width: 17px;
    height: 17px;
}

.nav-right {
    display: flex;
    margin-left: 4px;
}

.badge {
    position: absolute;
    top: -4px;
    right: -2px;
    padding: 0 4px;
    background: #5f5f5f;
    border-radius: 2px;
    color: #fff;
    font-size: 9px;
    line-height: 11px;
}

.gh-box {
    display: flex;
    align-items: center;
    justify-content: center;
    width: 16px;
    height: 16px;
    background: #111;
}

.gh-box svg {
    width: 14px;
    height: 14px;
    fill: #fff;
    stroke: none;
}

.bookmarks {
    flex: 1;
    display: flex;
    align-items: center;
    padding-top: 3px;
    white-space: nowrap;
}

.bm-tool {
    display: flex;
    align-items: center;
    justify-content: center;
    height: 20px;
}

.bm-star { flex: 0 0 31px; }
.bm-wrench { flex: 0 0 26px; }

.bm-minus {
    flex: 0 0 32px;
    border-right: 1px solid #d6c6bc;
}

.bm-zoom {
    flex: 0 0 70px;
    height: 20px;
    line-height: 20px;
    text-align: center;
    border-right: 1px solid #d6c6bc;
}

.bm-plus { flex: 0 0 30px; }

.bm-lib {
    flex: 0 0 28px;
    margin-right: 3px;
}

.bm {
    display: flex;
    align-items: center;
    gap: 5px;
    margin-right: 11px;
}

.bm-wide {
    margin-right: 17px;
}

.bm-icon {
    width: 16px;
    height: 16px;
}

.bm-m {
    width: 16px;
    height: 16px;
    background: #111;
    color: #fff;
    font-family: "Liberation Serif", serif;
    font-weight: 700;
    font-size: 13px;
    line-height: 13px;
    text-align: center;
}

.bm-rc {
    width: 16px;
    height: 16px;
    margin-right: -2px;
    background: #fff;
    color: #111;
    font-family: "Liberation Serif", serif;
    font-size: 9px;
    line-height: 8px;
}

.rc-c {
    margin-left: 6px;
    font-size: 11px;
}

.bm-ask {
    width: 16px;
    height: 16px;
    border-radius: 50%;
    background: #e25400;
    color: #fff;
    font-size: 7px;
    line-height: 15px;
    text-align: center;
}

.bm-more {
    flex: 0 0 30px;
    margin-left: auto;
}

/* page content */
.viewport {
    flex: 1;
    min-height: 0;
    display: flex;
    overflow: hidden;
}

.page {
    flex: 1;
    min-width: 0;
    color: #24292e;
}

.dropzone,
.current-file,
.upload-status,
.progress,
.file-list {
    width: 972px;
    margin-left: auto;
    margin-right: auto;
}

.dropzone {
    height: 196px;
    padding-top: 22px;
    text-align: center;
    border: 1px solid #e1e4e8;
    border-top: none;
    border-radius: 0 0 4px 4px;
}

.file-types {
    display: flex;
    justify-content: center;
    align-items: center;
    gap: 8px;
    height: 40px;
}

.file-types svg {
    fill: none;
    stroke: #707478;
    stroke-width: 1.7;
}

.ft-sm {
    width: 20px;
    height: 22px;
}

.ft-md {
    width: 28px;
    height: 32px;
}

.ft-lg {
    width: 35px;
    height: 40px;
}

.file-types .ft-bar {
    fill: #707478;
    stroke: none;
}

.file-types .ft-thick {
    stroke-width: 3;
}

.drop-title {
    margin: 7px 0 0;
    font-size: 19.2px;
    line-height: 24px;
    font-weight: 700;
}

.drop-sub {
    margin: 7px 0 0;
    font-size: 14.3px;
    line-height: 20px;
}

.drop-sub a {
    color: #0366d6;
    text-decoration: none;
}

.current-file {
    display: flex;
    align-items: center;
    gap: 5px;
    margin-top: 10px;
    height: 20px;
    font-size: 12.8px;
}

.file-icon {
    flex: none;
    width: 13px;
    height: 13px;
    fill: #24292e;
}

.upload-status {
    margin-top: 3px;
    font-size: 9.6px;
    line-height: 16px;
}

.progress {
    height: 8px;
    margin-top: 7px;
    background: #28a745;
    border-radius: 4px;
}

.file-list {
    margin-top: 12px;
    margin-bottom: 0;
    padding: 0;
    list-style: none;
    border: 1px solid #e1e4e8;
    border-radius: 4px;
}

.file-row {
    height: 42.63px;
    display: flex;
    align-items: center;
    gap: 7px;
    padding: 0 12px 0 11px;
    border-bottom: 1px solid #e1e4e8;
    font-size: 11.2px;
}

.file-row svg {
    margin-top: 1px;
}

.file-name {
    flex: 1;
    margin-top: -2px;
}

.x-icon {
    width: 13px;
    height: 13px;
    fill: #24292e;
}

.scrollbar {
    flex: 0 0 12px;
    padding: 56px 2px 0 3px;
    background: #ccc;
    border-left: 1px solid #bdbdbd;
}

.scroll-thumb {
    height: 199px;
    background: #7f8585;
    border-radius: 4px;
}

/* ubuntu dock */
.dock {
    flex: 0 0 36px;
    position: relative;
    display: flex;
    align-items: center;
    background: linear-gradient(90deg, #171e2e, #1b2436 30%, #24303f 52%, #1f2a3b 70%, #19222f);
    border-top: 1px solid #000;
}

.dock-art {
    position: absolute;
    left: 0;
    top: 0;
    width: 100%;
    height: 100%;
}

.dock-item {
    position: relative;
    flex: 0 0 40px;
    height: 32px;
    display: flex;
    align-items: center;
    justify-content: center;
    margin-top: 1px;
    border-radius: 4px;
}

.dock-item.is-active {
    flex-basis: 32px;
    margin: 1px 4px 0;
    background: rgba(255, 255, 255, 0.17);
}

/* running-app dots */
.dock-item.dot1::after,
.dock-item.dot2::after,
.dock-item.dot3::after {
    content: "";
    position: absolute;
    left: 50%;
    bottom: 0;
    width: 3px;
    height: 3px;
    margin-left: -1px;
    border-radius: 50%;
    background: #e95420;
}

.dock-item.dot2::after {
    margin-left: -3px;
    box-shadow: 5px 0 0 #e95420;
}

.dock-item.dot3::after {
    margin-left: -6px;
    box-shadow: 5px 0 0 #e95420, 10px 0 0 #e95420;
}

.dk {
    width: 20px;
    height: 20px;
}

.dk-ff {
    width: 22px;
    height: 22px;
}

.dk-mario {
    height: 22px;
    width: 16px;
}

.dk-a-gray {
    color: #d8d8d8;
    fill: #4a4a4a;
}

.dk-a-purple {
    color: #dcd2e4;
    fill: #6a2c7e;
}

.dk-sysmon {
    width: 20px;
    height: 20px;
    background: #444;
    border-radius: 2px;
}

.dk-sysmon svg {
    display: block;
    width: 20px;
    height: 20px;
}

.dk-kanji {
    width: 18px;
    height: 20px;
    background: #f4f4f4;
    border-radius: 2px;
    color: #3b6fd8;
    font-family: "Noto Sans CJK JP", sans-serif;
    font-size: 14px;
    line-height: 20px;
    text-align: center;
}

.dk-cal {
    width: 20px;
    height: 20px;
    background: #2fa892;
    border-radius: 2px;
    color: #eef;
    font-family: "Noto Sans", sans-serif;
    font-size: 11px;
    line-height: 20px;
    text-align: center;
}

.show-apps {
    position: relative;
    display: grid;
    grid-template-columns: repeat(3, 3px);
    gap: 3px;
    margin-left: auto;
    margin-right: 16px;
}

.show-apps i {
    width: 3px;
    height: 3px;
    background: #fff;
}

/* tiny labels inside icons */
.svg-p {
    font: 700 9px "Liberation Sans", sans-serif;
    fill: #fff;
    text-anchor: middle;
}

.svg-dell {
    font: 700 6px "Liberation Sans", sans-serif;
    fill: #0a6fb5;
    text-anchor: middle;
}

.svg-a {
    font: 700 11px "Liberation Sans", sans-serif;
    fill: currentColor;
    text-anchor: middle;
}

.svg-bag {
    font: 700 10px "Liberation Sans", sans-serif;
    fill: #fff;
    text-anchor: middle;
}

.svg-ub {
    font: 700 6px "Liberation Sans", sans-serif;
    fill: #fff;
    text-anchor: middle;
}
```
